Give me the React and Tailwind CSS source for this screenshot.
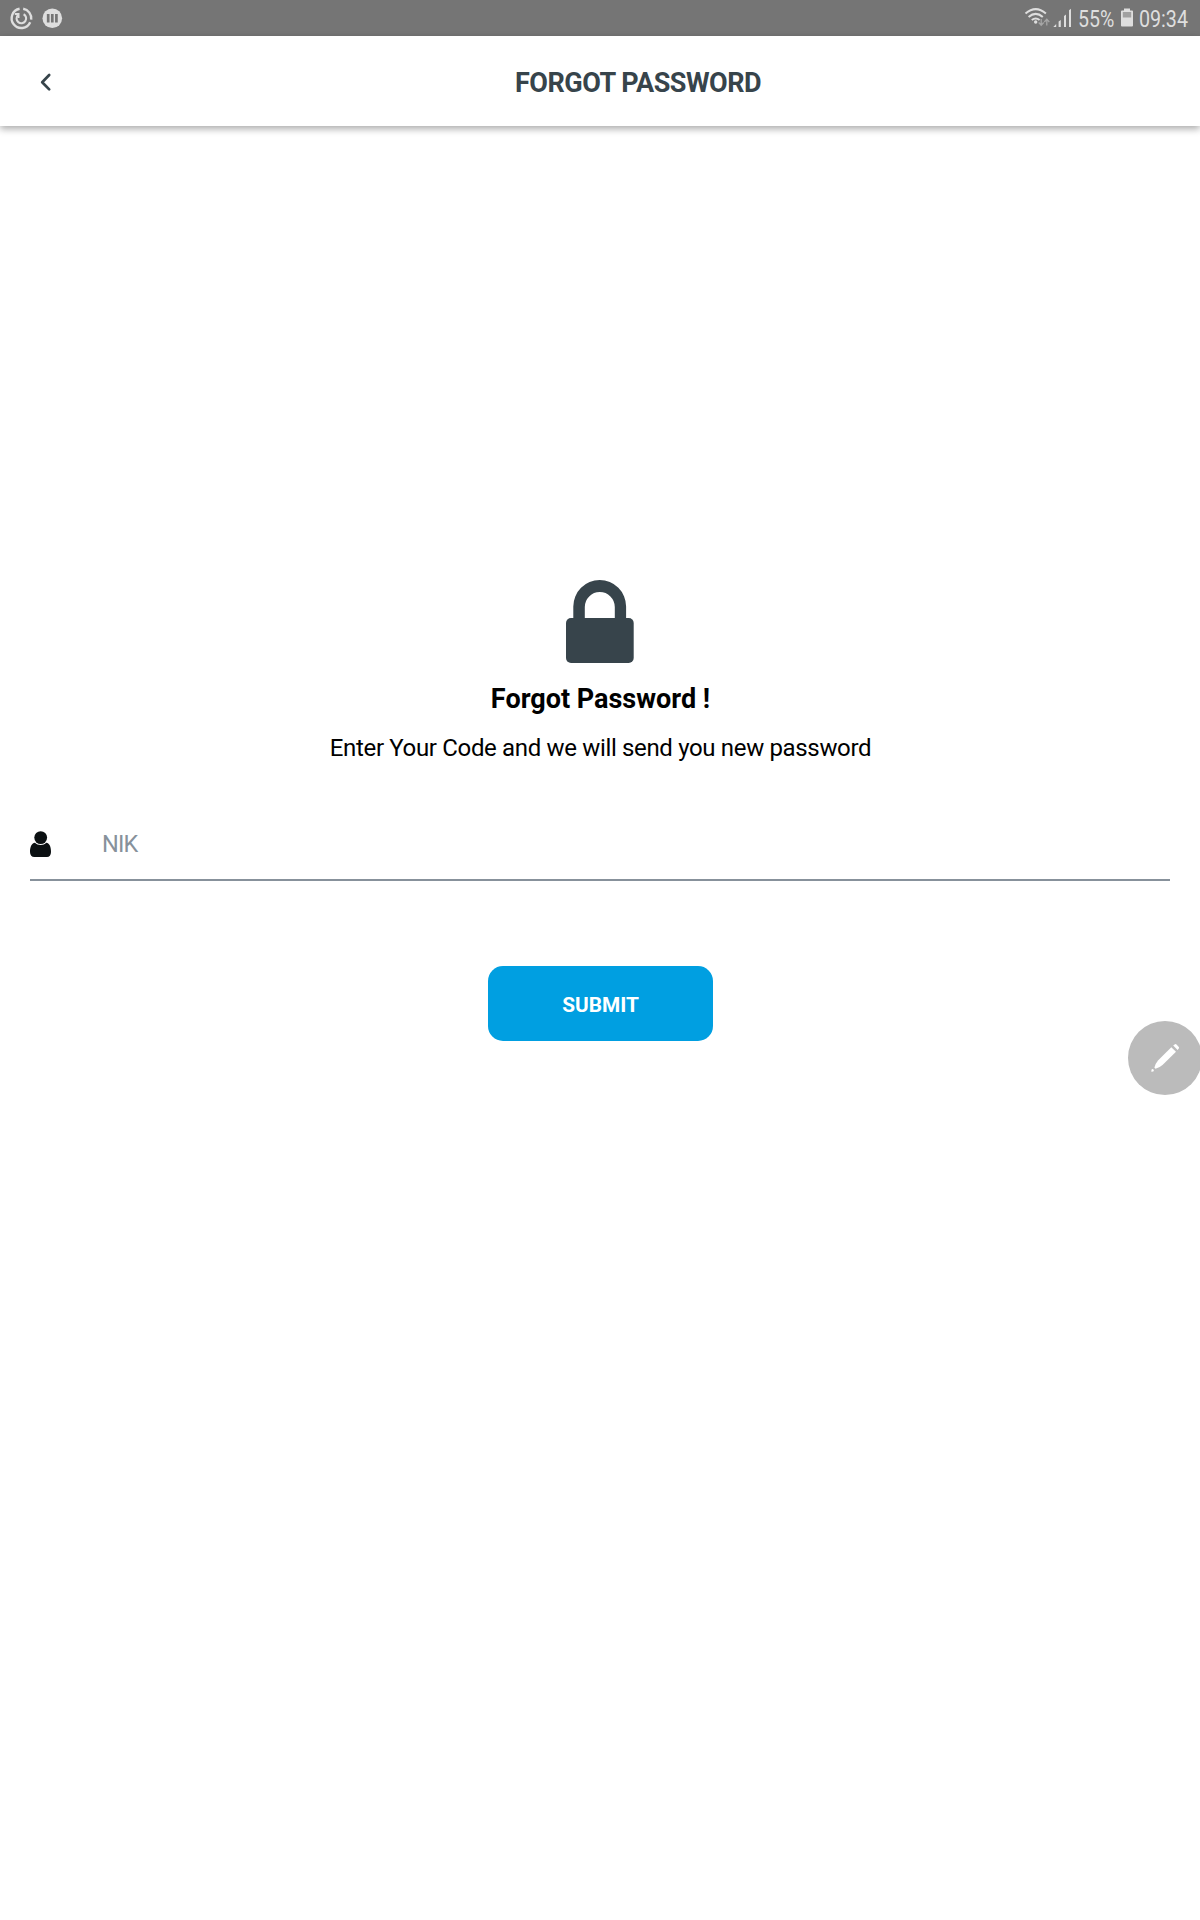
function StatusBar() {
  return (
    <div className="flex h-9 items-center justify-between bg-[#757575] text-[#dedede]">
      <svg className="h-9 w-[100px]" viewBox="0 0 100 36" fill="none">
        <g stroke="#dedede">
          <path d="M19.6 8.8A9.7 9.7 0 1 0 30.2 22.3M23.2 8.8A9.7 9.7 0 0 1 31.2 19.6" strokeWidth="2.4" />
          <path d="M23.6 14.2A4.8 4.8 0 1 1 18 15" strokeWidth="2.1" />
          <path d="M14.8 14H18.6V18" strokeWidth="1.8" />
        </g>
        <circle cx="52.3" cy="18.2" r="9.8" fill="#dedede" />
        <path d="M48.2 14V22.6M52.3 14V22.6M56.4 14V22.6" stroke="#757575" strokeWidth="2.7" />
      </svg>
      <div className="flex h-9 items-center">
        <svg className="h-9 w-[53px]" viewBox="1022 0 53 36" fill="none">
          <g stroke="#dedede" strokeWidth="2">
            <path d="M1025.5 13.6Q1035.7 4.7 1045.9 13.6" />
            <path d="M1028.6 17Q1035.7 10.8 1042.8 17" />
            <path d="M1031.8 20.1Q1035.7 16.8 1039.6 20.1" />
          </g>
          <circle cx="1035.7" cy="22" r="1.7" fill="#dedede" />
          <g stroke="#a6a6a6" strokeWidth="1.3">
            <path d="M1041.2 19V25M1038.7 22.5L1041.2 25.2L1043.7 22.5M1046.8 25.5V19.5M1044.3 22L1046.8 19.3L1049.3 22" />
          </g>
          <path d="M1053.3 27L1056.2 24V27ZM1058.6 21.5L1060.8 20V27H1058.6ZM1064 16L1066 14.5V27H1064ZM1069 10.2L1071 8.8V27H1069Z" fill="#dedede" />
        </svg>
        <div className="ml-[3px] flex w-[43px] items-center">
          <span className="mt-[3px] origin-left scale-x-[0.85] text-[23px] leading-none">55%</span>
        </div>
        <svg className="h-9 w-[13px]" viewBox="1121 0 13 36">
          <path d="M1124 8.5H1130V10.5H1132Q1133 10.5 1133 11.5V25.5Q1133 26.5 1132 26.5H1122Q1121 26.5 1121 25.5V11.5Q1121 10.5 1122 10.5H1124Z" fill="#dedede" />
          <path d="M1122.8 12H1131.2V17.5H1122.8Z" fill="#a0a0a0" />
        </svg>
        <div className="ml-[5px] flex w-[61px] items-center">
          <span className="mt-[3px] origin-left scale-x-[0.855] text-[23px] leading-none">09:34</span>
        </div>
      </div>
    </div>
  );
}

function Header() {
  return (
    <header className="relative flex h-[90px] items-center bg-white shadow-[0_3px_7px_rgba(0,0,0,0.33)]">
      <button aria-label="Back" className="ml-[38px] flex h-6 w-4 items-center">
        <svg className="h-6 w-4" viewBox="0 0 16 24" fill="none" stroke="#37444b" strokeWidth="2.7" strokeLinecap="round" strokeLinejoin="round">
          <path d="M11.2 6L4.2 13.2L11.2 20.4" />
        </svg>
      </button>
      <h1 className="ml-[461px] mt-[3px] whitespace-nowrap text-[27px] font-bold leading-8 tracking-[-0.48px] text-[#37444b]">FORGOT PASSWORD</h1>
    </header>
  );
}

export default function App() {
  return (
    <div className="relative flex h-[1920px] w-[1200px] flex-col overflow-hidden bg-white font-['Roboto',sans-serif]">
      <StatusBar />
      <Header />
      <main className="flex flex-col px-[30px] pt-[454px]">
        <svg className="h-[83px] w-[68px] self-center" viewBox="0 0 68 83" fill="#37444b">
          <path d="M7.3 38V26.5A26.4 26.4 0 0 1 60.1 26.5V38H48.8V27A15 15 0 0 0 18.8 27V38Z" />
          <rect y="38" width="67.7" height="45" rx="5" />
        </svg>
        <h2 className="mt-5 pl-px text-center text-[27px] font-bold leading-8 text-black">Forgot Password !</h2>
        <p className="mt-[17px] pl-px text-center text-2xl leading-8 tracking-[-0.34px] text-black">Enter Your Code and we will send you new password</p>
        <div className="mt-[49px] flex h-[68px] items-center border-b-2 border-[#87919b] pb-1">
          <svg className="h-[26px] w-[21px]" viewBox="0 0 21 26" fill="#0b1012">
            <circle cx="10.7" cy="6.6" r="6.4" />
            <path d="M5 11.8C1.3 12.2 0 16.4 0 21C0 24 1.8 26 4.3 26H17C19.4 26 21 24 21 21C21 16.4 19.9 12.2 16.2 11.8C14.8 13.2 13 14 10.7 14S6.4 13.2 5 11.8Z" />
          </svg>
          <input aria-label="NIK" placeholder="NIK" className="ml-[51px] h-10 grow bg-transparent text-[23.5px] tracking-[-0.8px] outline-none placeholder:text-[#87919b]" />
        </div>
        <button className="mt-[85px] h-[75px] w-[225px] self-center rounded-[15px] bg-[#009fe1] pl-px pt-1 text-[20.8px] font-bold text-white">SUBMIT</button>
      </main>
      <button aria-label="Edit" className="absolute left-[1128px] top-[1021px] h-[74px] w-[74px] rounded-full bg-[#bbbbbb]">
        <svg className="h-[74px] w-[74px]" viewBox="0 0 74 74" fill="white">
          <path d="M43.3 26.2L48 30.8L34.5 44Q31 47 27.5 47.7L26.4 46.7Q27 43 30 39.5Z" />
          <path d="M45.2 24.5L47 23.2Q47.8 22.8 48.5 23.5L50.8 26Q51.3 26.8 50.8 27.4L49.6 29Z" />
          <path d="M23.3 50.8L23.6 48.6Q24.5 47.5 25.5 48.4Q26.4 49.5 25.3 50.5Z" />
        </svg>
      </button>
    </div>
  );
}
